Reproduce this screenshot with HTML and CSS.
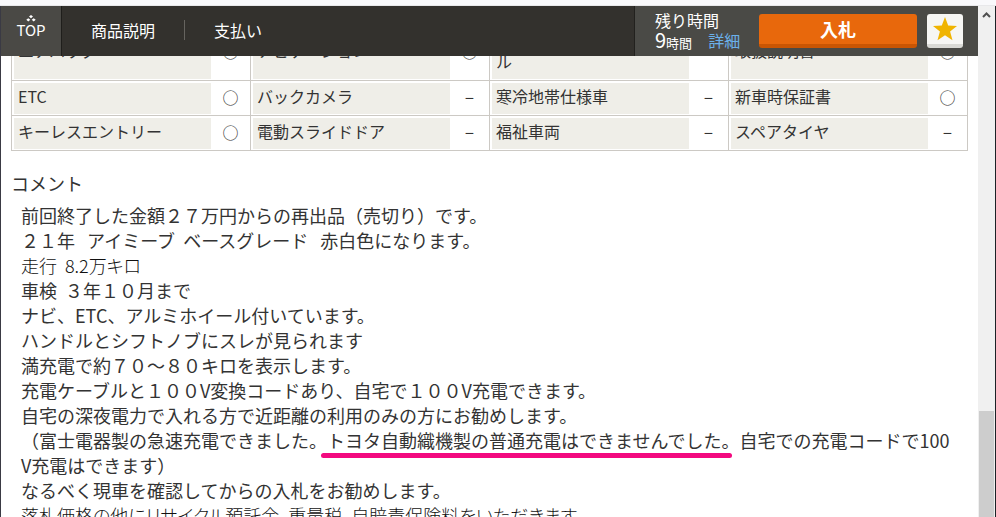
FILE: index.html
```
<!DOCTYPE html>
<html lang="ja">
<head>
    <meta charset="UTF-8">
    <meta name="viewport" content="width=device-width, initial-scale=1.0">
    <title>商品説明</title>
    <link rel="stylesheet" href="styles.css">
</head>
<body>
    <!-- Bottom edge of the browser toolbar -->
    <div class="toolbar"></div>

    <div class="window">
        <div class="page">
            <!-- Header Bar -->
            <header class="header">
                <a class="top-link" href="#">
                    <svg width="10" height="7" viewBox="0 0 10 7" aria-hidden="true">
                        <path d="M5 0l2 1.600L5 3.200 3 1.600zM2.300 3.200l2 1.600-2 1.600-2-1.600zM7.700 3.200l2 1.600-2 1.600-2-1.600z" fill="#fff"/>
                    </svg>
                    <span>TOP</span>
                </a>
                <nav class="nav">
                    <a href="#description">商品説明</a>
                    <a href="#payment">支払い</a>
                </nav>
                <div class="bid-area">
                    <div class="remaining">
                        <p>残り時間</p>
                        <p class="time"><span><b>9</b>時間</span><a href="#">詳細</a></p>
                    </div>
                    <button class="bid" type="button">入札</button>
                    <button class="watch" type="button" aria-label="ウォッチリストに追加">
                        <svg width="26" height="24" viewBox="0 0 26 24" aria-hidden="true">
                            <path d="M13 0l3.200 8.500 8.800.4-6.900 5.600 2.400 8.700L13 18.200l-7.500 5 2.400-8.700L1 8.900l8.800-.4z" fill="#f0b400"/>
                        </svg>
                    </button>
                </div>
            </header>

            <!-- Main Content -->
            <main class="main" id="description">
                <table class="equipment">
                    <colgroup>
                        <col><col class="mark"><col><col class="mark"><col><col class="mark"><col><col class="mark">
                    </colgroup>
                    <tbody>
                        <tr>
                            <th scope="row">エアバッグ</th><td>○</td>
                            <th scope="row">ナビゲーション</th><td>○</td>
                            <th scope="row">アルミホイー<br>ル</th><td>−</td>
                            <th scope="row">取扱説明書</th><td>○</td>
                        </tr>
                        <tr>
                            <th scope="row">ETC</th><td>○</td>
                            <th scope="row">バックカメラ</th><td>−</td>
                            <th scope="row">寒冷地帯仕様車</th><td>−</td>
                            <th scope="row">新車時保証書</th><td>○</td>
                        </tr>
                        <tr>
                            <th scope="row">キーレスエントリー</th><td>○</td>
                            <th scope="row">電動スライドドア</th><td>−</td>
                            <th scope="row">福祉車両</th><td>−</td>
                            <th scope="row">スペアタイヤ</th><td>−</td>
                        </tr>
                    </tbody>
                </table>

                <h2>コメント</h2>
                <div class="comment">
                    <p>前回終了した金額２７万円からの再出品（売切り）です。</p>
                    <p>２１年&nbsp;&nbsp;&nbsp;アイミーブ&nbsp; ベースグレード&nbsp;&nbsp;&nbsp;赤白色になります。</p>
                    <p class="light">走行&nbsp;&nbsp;8.2万キロ</p>
                    <p>車検&nbsp;&nbsp;３年１０月まで</p>
                    <p>ナビ、ETC、アルミホイール付いています。</p>
                    <p>ハンドルとシフトノブにスレが見られます</p>
                    <p>満充電で約７０～８０キロを表示します。</p>
                    <p>充電ケーブルと１００V変換コードあり、自宅で１００V充電できます。</p>
                    <p>自宅の深夜電力で入れる方で近距離の利用のみの方にお勧めします。</p>
                    <p>（富士電器製の急速充電できました。<span class="marker">トヨタ自動織機製の普通充電はできませんでした。</span>自宅での充電コードで100V充電はできます）</p>
                    <p>なるべく現車を確認してからの入札をお勧めします。</p>
                    <p class="light">落札価格の他にリサイクル預託金、重量税、自賠責保険料をいただきます。</p>
                </div>
            </main>
        </div>

        <!-- Scrollbar -->
        <div class="scrollbar">
            <svg width="9" height="6" viewBox="0 0 9 6" aria-hidden="true">
                <path d="M1 5l3.500-3.500L8 5" fill="none" stroke="#505050" stroke-width="2"/>
            </svg>
            <div class="thumb"></div>
        </div>
    </div>
</body>
</html>
```
FILE: styles.css
```
/* General Styling */
* {
    box-sizing: border-box;
}

body {
    display: flex;
    flex-direction: column;
    height: 100vh;
    margin: 0;
    overflow: hidden;
    background-color: #fff;
    color: #333;
    font-family: "Noto Sans CJK JP", sans-serif;
    font-size: 16px;
    line-height: 22px;
}

p, h2 {
    margin: 0;
}

a {
    text-decoration: none;
}

.toolbar {
    flex: none;
    height: 6px;
    background-color: #f9f9fb;
    border-bottom: 1px solid #e8e8ea;
}

.window {
    display: flex;
    flex: 1;
    min-height: 0;
    border-left: 1px solid #3a3a44;
    border-right: 1px solid #1c2226;
}

.page {
    flex: 1;
    min-width: 0;
    overflow: hidden;
}

/* Header Bar */
.header {
    position: relative;
    z-index: 1;
    display: flex;
    height: 50px;
    background-color: #33312d;
    color: #fff;
}

.header a {
    color: #fff;
}

.top-link {
    display: flex;
    flex-direction: column;
    align-items: center;
    width: 61px;
    padding-top: 9px;
    background-color: #4a4945;
    border-right: 1px solid #1f1e1b;
    font-size: 15px;
    line-height: 16px;
}

.nav {
    display: flex;
    flex: 1;
    align-items: center;
    padding-bottom: 2px;
}

.nav a {
    padding: 0 29px;
    line-height: 20px;
}

.nav a + a {
    border-left: 1px solid #66645f;
}

.bid-area {
    display: flex;
    align-items: center;
    padding-right: 15px;
    background-color: #4a4a46;
    border-left: 1px solid #22211e;
}

.remaining {
    width: 124px;
    padding-left: 20px;
    line-height: 20px;
    white-space: nowrap;
}

.time {
    display: flex;
    gap: 16px;
    font-size: 13px;
}

.time b {
    font-size: 20px;
    font-weight: normal;
}

.header .time a {
    color: #6bb1ea;
    font-size: 16px;
}

.bid, .watch {
    height: 34px;
    padding: 0;
    border: 0;
    border-radius: 3px;
    font-family: inherit;
}

.bid {
    width: 158px;
    margin-right: 10px;
    background-color: #e8680c;
    border-bottom: 4px solid #c95503;
    color: #fff;
    font-size: 18px;
    font-weight: bold;
    line-height: 30px;
}

.watch {
    display: flex;
    align-items: center;
    justify-content: center;
    width: 36px;
    background-color: #f6f6f4;
    border-bottom: 4px solid #d9d9d5;
}

/* Main Content */
.main {
    margin-top: -33px;
    padding: 0 10px;
}

.equipment {
    width: 100%;
    table-layout: fixed;
    border-spacing: 0;
    border-top: 1px solid #ccc9c4;
    border-right: 1px solid #ccc9c4;
}

.equipment .mark {
    width: 39px;
}

.equipment th, .equipment td {
    border-bottom: 1px solid #ccc9c4;
}

.equipment th {
    padding: 4px 6px 8px;
    border-left: 1px solid #ccc9c4;
    background-color: #efeee8;
    box-shadow: inset 2px 2px 0 #fff, inset 0 -1px 0 #fff;
    font-weight: normal;
    text-align: left;
}

.equipment td {
    padding: 0 0 3px;
    text-align: center;
}

h2 {
    margin-top: 20px;
    font-size: 18px;
    font-weight: normal;
    line-height: 25px;
}

.comment {
    padding: 7px 10px 0;
    font-size: 18px;
    line-height: 25px;
    word-break: break-all;
}

.light {
    color: #111;
    font-weight: 300;
    font-feature-settings: "palt";
}

/* Highlighted sentence */
.marker {
    position: relative;
}

.marker::after {
    content: "";
    position: absolute;
    right: 8px;
    bottom: -5px;
    left: -6px;
    height: 5px;
    border-radius: 3px;
    background-color: #f3097f;
}

/* Scrollbar */
.scrollbar {
    display: flex;
    flex-direction: column;
    align-items: center;
    justify-content: space-between;
    width: 17px;
    padding-top: 6px;
    background-color: #f0f0f0;
}

.thumb {
    width: 15px;
    height: 21%;
    background-color: #cdcdcd;
}
```
